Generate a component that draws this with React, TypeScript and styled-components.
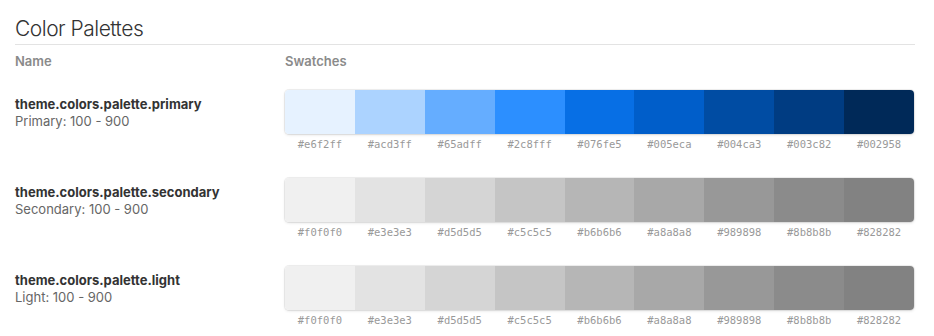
import React from "react";
import styled, { createGlobalStyle } from "styled-components";

const GlobalStyle = createGlobalStyle`
    body {
        margin: 0;
        background: #fff;
        font-family: Inter, "Open Sans", sans-serif;
        color: #333;
    }
`;

// Page wrapper
const Page = styled.section`
    width: 900px;
    padding: 16px 0 0 15px;
`;

const Title = styled.h2`
    font-size: 21px;
    font-weight: 300;
    color: #333;
    margin: 0;
    padding-bottom: 3px;
    border-bottom: 1px solid #e3e3e3;
    letter-spacing: -0.5px;
`;

const Row = styled.div`
    display: grid;
    grid-template-columns: 270px 1fr;
    align-items: start;
`;

const HeadRow = styled(Row)`
    padding: 8px 0 21px;
`;

const Head = styled.span`
    font-size: 13px;
    font-weight: 600;
    color: #8a8a8a;
`;

const PaletteRow = styled(Row)`
    height: 88px;
`;

const NameCell = styled.div`
    padding-top: 6px;
    display: flex;
    flex-direction: column;
    gap: 1px;
`;

const PaletteName = styled.span`
    font-size: 13px;
    font-weight: 700;
    color: #333;
`;

const PaletteDesc = styled.span`
    font-size: 13px;
    color: #666;
`;

const Swatches = styled.div`
    display: grid;
    grid-template-columns: repeat(9, 1fr);
    width: 629px;
`;

const Bar = styled.div`
    grid-column: 1 / -1;
    display: grid;
    grid-template-columns: repeat(9, 1fr);
    height: 44px;
    border-radius: 4px;
    overflow: hidden;
    box-shadow: 0 0 0 1px rgba(0, 0, 0, 0.06), 0 1px 3px rgba(0, 0, 0, 0.12);
`;

const Chip = styled.div<{ $color: string }>`
    background: ${(p) => p.$color};
`;

const Label = styled.span`
    font-family: "DejaVu Sans Mono", monospace;
    font-size: 10.5px;
    color: #999;
    text-align: center;
    padding-top: 4px;
`;

const palettes = [
    {
        name: "theme.colors.palette.primary",
        desc: "Primary: 100 - 900",
        colors: ["#e6f2ff", "#acd3ff", "#65adff", "#2c8fff", "#076fe5", "#005eca", "#004ca3", "#003c82", "#002958"],
    },
    {
        name: "theme.colors.palette.secondary",
        desc: "Secondary: 100 - 900",
        colors: ["#f0f0f0", "#e3e3e3", "#d5d5d5", "#c5c5c5", "#b6b6b6", "#a8a8a8", "#989898", "#8b8b8b", "#828282"],
    },
    {
        name: "theme.colors.palette.light",
        desc: "Light: 100 - 900",
        colors: ["#f0f0f0", "#e3e3e3", "#d5d5d5", "#c5c5c5", "#b6b6b6", "#a8a8a8", "#989898", "#8b8b8b", "#828282"],
    },
];

function App() {
    return (
        <>
            <GlobalStyle />
            <Page>
                <Title>Color Palettes</Title>
                <HeadRow>
                    <Head>Name</Head>
                    <Head>Swatches</Head>
                </HeadRow>
                {palettes.map((p) => (
                    <PaletteRow key={p.name}>
                        <NameCell>
                            <PaletteName>{p.name}</PaletteName>
                            <PaletteDesc>{p.desc}</PaletteDesc>
                        </NameCell>
                        <Swatches>
                            <Bar>
                                {p.colors.map((c) => (
                                    <Chip key={c} $color={c} />
                                ))}
                            </Bar>
                            {p.colors.map((c) => (
                                <Label key={c}>{c}</Label>
                            ))}
                        </Swatches>
                    </PaletteRow>
                ))}
            </Page>
        </>
    );
}

export default App;
